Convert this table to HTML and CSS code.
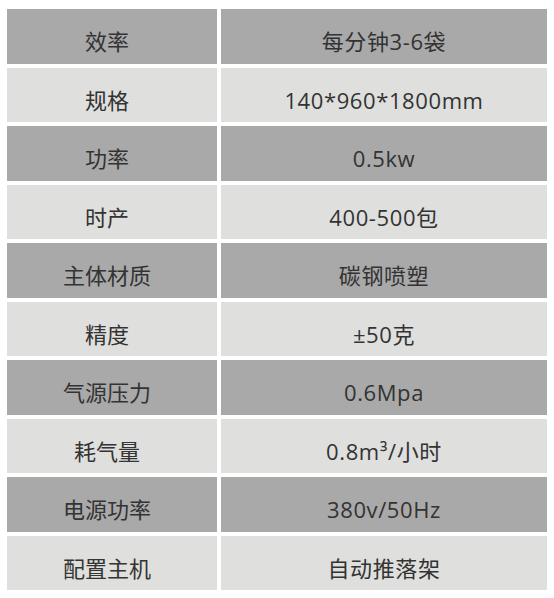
FILE: index.html
```html
<!DOCTYPE html>
<html lang="zh-CN">
<head>
<meta charset="utf-8">
<title>参数表</title>
<link rel="stylesheet" href="styles.css">
</head>
<body>
<div class="table">
  <div class="row dark"><div class="cell key">效率</div><div class="cell val">每分钟3-6袋</div></div>
  <div class="row light"><div class="cell key">规格</div><div class="cell val">140*960*1800mm</div></div>
  <div class="row dark"><div class="cell key">功率</div><div class="cell val">0.5kw</div></div>
  <div class="row light"><div class="cell key">时产</div><div class="cell val">400-500包</div></div>
  <div class="row dark"><div class="cell key">主体材质</div><div class="cell val">碳钢喷塑</div></div>
  <div class="row light"><div class="cell key">精度</div><div class="cell val">±50克</div></div>
  <div class="row dark"><div class="cell key">气源压力</div><div class="cell val">0.6Mpa</div></div>
  <div class="row light"><div class="cell key">耗气量</div><div class="cell val">0.8m³/小时</div></div>
  <div class="row dark"><div class="cell key">电源功率</div><div class="cell val">380v/50Hz</div></div>
  <div class="row light"><div class="cell key">配置主机</div><div class="cell val">自动推落架</div></div>
</div>
</body>
</html>
```

FILE: styles.css
```css
html, body {
  margin: 0;
  padding: 0;
  background: #ffffff;
}
body {
  font-family: "Open Sans", "Noto Sans CJK SC", sans-serif;
  color: #333333;
}
.table {
  padding: 9px 7px 0 7px;
  display: flex;
  flex-direction: column;
  gap: 4px;
  width: 540px;
}
.row {
  display: grid;
  grid-template-columns: 210px 326px;
  column-gap: 4px;
  height: 54.5px;
}
.cell {
  display: flex;
  align-items: center;
  justify-content: center;
  padding-top: 10px;
  box-sizing: border-box;
  font-size: 22px;
  line-height: 1;
}
.val {
  letter-spacing: 0.6px;
}
.key {
  padding-right: 10px;
}
.dark .cell { background: #a9a9a9; }
.light .cell { background: #dfdfdd; }
```
